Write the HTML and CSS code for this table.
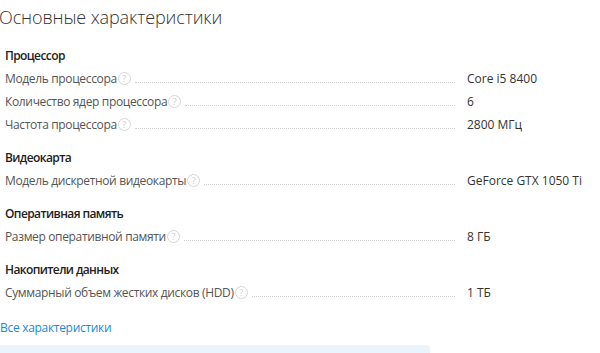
FILE: index.html
```html
<!DOCTYPE html>
<html lang="ru">
<head>
<meta charset="utf-8">
<title>Основные характеристики</title>
<link rel="stylesheet" href="styles.css">
</head>
<body>
<div class="specs">
  <h2 class="specs-title">Основные характеристики</h2>

  <div class="group">
    <div class="group-name">Процессор</div>
    <div class="row"><div class="label"><span>Модель процессора</span><span class="hint">?</span><span class="dots"></span></div><div class="value">Core i5 8400</div></div>
    <div class="row"><div class="label"><span>Количество ядер процессора</span><span class="hint">?</span><span class="dots"></span></div><div class="value">6</div></div>
    <div class="row"><div class="label"><span>Частота процессора</span><span class="hint">?</span><span class="dots"></span></div><div class="value">2800 МГц</div></div>
  </div>

  <div class="group">
    <div class="group-name">Видеокарта</div>
    <div class="row"><div class="label"><span>Модель дискретной видеокарты</span><span class="hint">?</span><span class="dots"></span></div><div class="value">GeForce GTX 1050 Ti</div></div>
  </div>

  <div class="group">
    <div class="group-name">Оперативная память</div>
    <div class="row"><div class="label"><span>Размер оперативной памяти</span><span class="hint">?</span><span class="dots"></span></div><div class="value">8 ГБ</div></div>
  </div>

  <div class="group">
    <div class="group-name">Накопители данных</div>
    <div class="row"><div class="label"><span>Суммарный объем жестких дисков (HDD)</span><span class="hint">?</span><span class="dots"></span></div><div class="value">1 ТБ</div></div>
  </div>

  <a class="all-link" href="#">Все характеристики</a>
  <div class="info-box"></div>
</div>
</body>
</html>
```

FILE: styles.css
```css
html, body {
  margin: 0;
  padding: 0;
  background: #fff;
}

body {
  font-family: "Open Sans", "Liberation Sans", sans-serif;
  font-size: 12px;
  color: #333;
}

.specs {
  width: 600px;
}

.specs-title {
  margin: 0;
  margin-left: -1px;
  font-size: 18px;
  font-weight: 300;
  line-height: 34px;
  letter-spacing: -0.1px;
  color: #333;
}

.group {
  margin-top: 10px;
  padding-left: 5px;
}

.group-name {
  font-weight: 600;
  line-height: 23px;
  letter-spacing: -0.6px;
  color: #222;
}

.row {
  display: flex;
  align-items: baseline;
  line-height: 23px;
}

.label {
  flex: 0 0 450px;
  display: flex;
  align-items: baseline;
  color: #555;
  letter-spacing: -0.35px;
}

.hint {
  flex: none;
  width: 11px;
  height: 11px;
  margin-left: 1px;
  border: 1px solid #d6d6d6;
  border-radius: 50%;
  color: #cfcfcf;
  font-size: 9px;
  line-height: 11px;
  letter-spacing: 0;
  text-align: center;
  align-self: center;
}

.dots {
  flex: 1;
  margin-left: 4px;
  border-bottom: 1px dotted #d0d0d0;
}

.value {
  margin-left: 12px;
  color: #333;
}

.all-link {
  display: block;
  margin-top: 12px;
  line-height: 23px;
  letter-spacing: -0.3px;
  color: #1a8ad4;
  text-decoration: none;
}

.info-box {
  margin-top: 6px;
  width: 430px;
  height: 20px;
  background: #eaf4fc;
  border-radius: 0 4px 0 0;
}
```
